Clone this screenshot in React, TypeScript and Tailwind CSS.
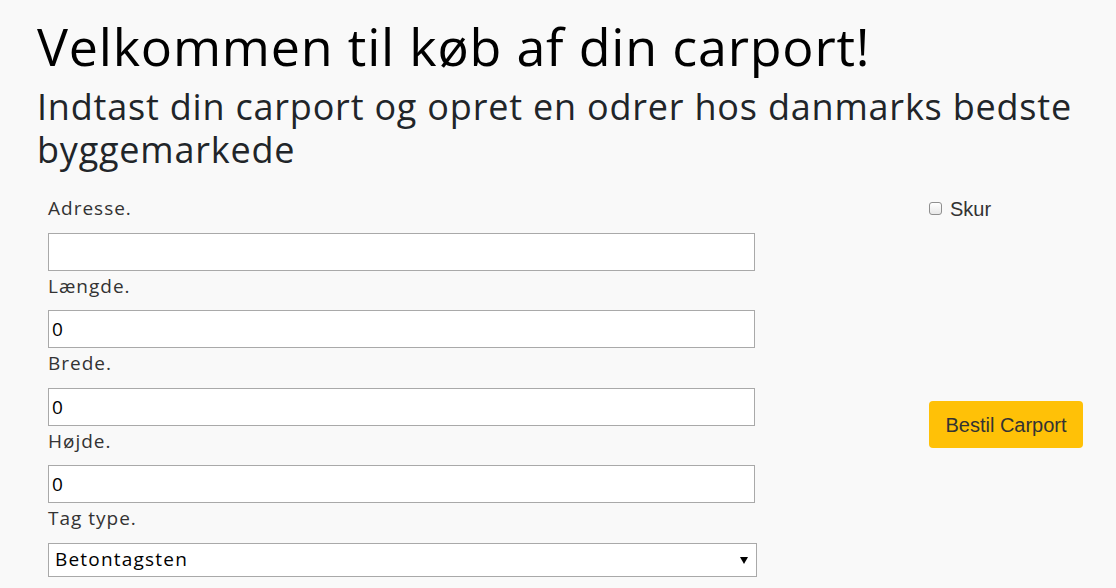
export default function App() {
  const fields = [
    { label: "Adresse.", value: "" },
    { label: "Længde.", value: "0" },
    { label: "Brede.", value: "0" },
    { label: "Højde.", value: "0" },
  ];

  return (
    <div className="min-h-[588px] w-full bg-[#f9f9f9] font-['Open_Sans',sans-serif] overflow-hidden">
      {/* HEADINGS */}
      <div className="pl-[37px] pt-[14px]">
        <h1 className="text-[52px] leading-[64px] tracking-[0.8px] text-black">
          Velkommen til køb af din carport!
        </h1>
        <h2 className="mt-[7px] text-[36px] leading-[43px] tracking-[0.8px] text-[#212529] w-[1070px]">
          Indtast din carport og opret en odrer hos danmarks bedste byggemarkede
        </h2>
      </div>

      {/* FORM */}
      <div className="flex pl-[48px] pt-[22px]">
        <form className="w-[709px] flex flex-col">
          {fields.map((f) => (
            <div key={f.label} className="flex flex-col">
              <label className="text-[19px] leading-[31.5px] mb-[8px] tracking-[1px] text-[#333]">
                {f.label}
              </label>
              <input
                type="text"
                defaultValue={f.value}
                className="w-[707px] h-[38px] bg-white border border-[#a9a9a9] px-[3px] text-[19px] text-black outline-none"
              />
            </div>
          ))}
          <label className="text-[19px] leading-[31.5px] mb-[8px] tracking-[1px] text-[#333]">
            Tag type.
          </label>
          <div className="relative w-[709px] h-[34px] bg-white border border-[#a9a9a9] flex items-center pl-[6px]">
            <span className="text-[19px] tracking-[1.2px] text-black">Betontagsten</span>
            <svg
              className="absolute right-[8px] top-[13px]"
              width="8"
              height="7"
              viewBox="0 0 8 7"
            >
              <path d="M0 0 H8 L4 7 Z" fill="#000" />
            </svg>
          </div>
        </form>

        {/* RIGHT COLUMN */}
        <div className="ml-[172px] flex flex-col items-start">
          <div className="flex items-center h-[31px]">
            <span className="w-[13px] h-[13px] rounded-[3px] border border-[#8f8f8f] bg-gradient-to-b from-white to-[#e8e8e8]" />
            <span className="ml-[8px] text-[20px] text-[#333] font-['Liberation_Sans',sans-serif]">
              Skur
            </span>
          </div>
          <button className="mt-[177px] w-[154px] h-[47px] rounded-[4px] bg-[#ffc107] text-[20px] text-[#333] font-['Liberation_Sans',sans-serif]">
            Bestil Carport
          </button>
        </div>
      </div>
    </div>
  );
}
